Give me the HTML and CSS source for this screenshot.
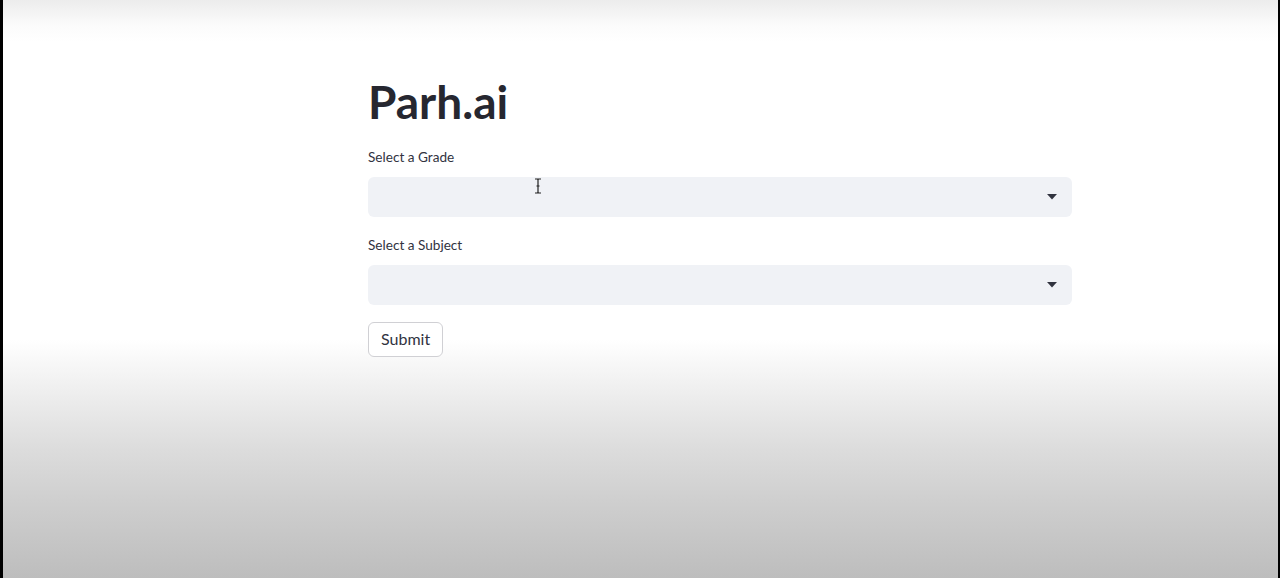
FILE: index.html
```html
<!DOCTYPE html>
<html lang="en">
<head>
<meta charset="utf-8">
<title>Parh.ai</title>
<link rel="stylesheet" href="styles.css">
</head>
<body>
<div class="frame">
  <main class="app">
    <h1 class="title">Parh.ai</h1>
    <div class="field">
      <label class="label">Select a Grade</label>
      <div class="select">
        <svg class="caret" width="10" height="6" viewBox="0 0 10 6"><path d="M0 0h10L5 5.5z" fill="#31333f"/></svg>
      </div>
    </div>
    <div class="field">
      <label class="label">Select a Subject</label>
      <div class="select">
        <svg class="caret" width="10" height="6" viewBox="0 0 10 6"><path d="M0 0h10L5 5.5z" fill="#31333f"/></svg>
      </div>
    </div>
    <button class="btn">Submit</button>
  </main>
  <svg class="cursor" width="8" height="16" viewBox="0 0 8 16"><path d="M1 1h2.5L4 1.8 4.5 1H7M4 2v12M1 15h2.5L4 14.2 4.5 15H7M2.5 8h3" stroke="#222" stroke-width="1.2" fill="none"/></svg>
</div>
</body>
</html>
```
FILE: styles.css
```css
* { box-sizing: border-box; }
html, body { margin: 0; height: 100%; }
body {
  background: #000;
  font-family: "Lato", "Source Sans Pro", sans-serif;
  color: #31333f;
}
.frame {
  position: relative;
  height: 578px;
  margin: 0 2px 0 3px;
  background: linear-gradient(to bottom, #ececec 0px, #fbfbfb 25px, #ffffff 42px, #ffffff 340px, #f2f2f2 380px, #dcdcdc 450px, #cfcfcf 500px, #bdbdbd 578px);
  padding: 75px 0 0 365px;
}
.app {
  width: 704px;
  display: flex;
  flex-direction: column;
}
.title {
  margin: 0;
  font-size: 46px;
  font-weight: 700;
  line-height: 53px;
  color: #262730;
}
.field {
  display: flex;
  flex-direction: column;
  margin-top: 20px;
}
.field + .field { margin-top: 19px; }
.label {
  font-size: 13.6px;
  line-height: 18px;
  margin-bottom: 11px;
  color: #31333f;
}
.select {
  height: 40px;
  background: #f0f2f6;
  border-radius: 6px;
  display: flex;
  align-items: center;
  justify-content: flex-end;
  padding-right: 15px;
}
.caret { display: block; }
.btn {
  align-self: flex-start;
  margin-top: 17px;
  height: 35px;
  padding: 0 12px 2px;
  font-family: inherit;
  font-size: 16px;
  color: #31333f;
  background: #fff;
  border: 1px solid #d0d0d4;
  border-radius: 6px;
}
.cursor {
  position: absolute;
  left: 531px;
  top: 178px;
}
```
